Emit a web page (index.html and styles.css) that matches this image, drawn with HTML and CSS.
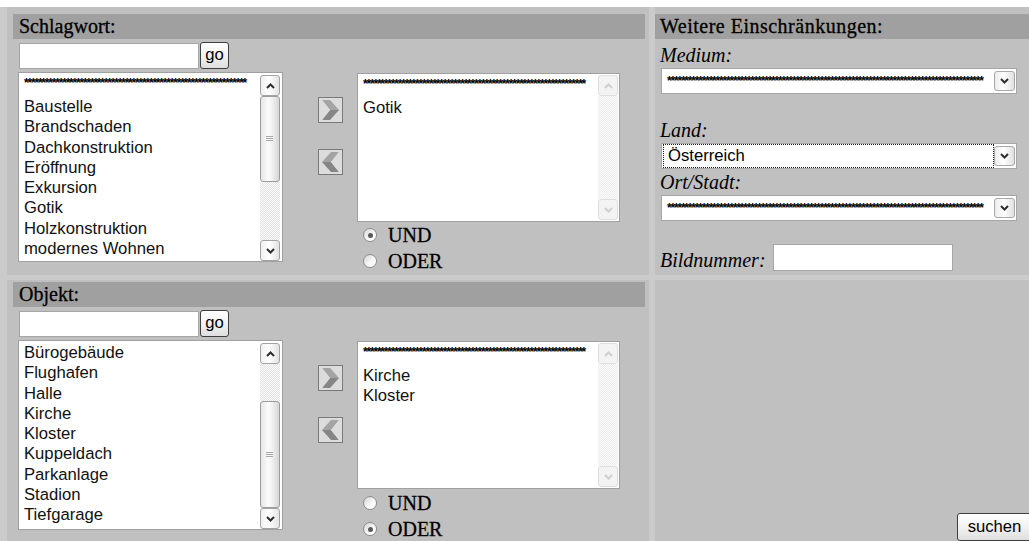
FILE: index.html
```html
<!DOCTYPE html>
<html lang="de">
<head>
<meta charset="utf-8">
<title>Bildsuche</title>
<link rel="stylesheet" href="styles.css">
</head>
<body>
<form class="search">

  <!-- Schlagwort -->
  <section class="panel panel-left panel-top">
    <h2 class="panel-title">Schlagwort:</h2>
    <div class="lookup">
      <span class="text-field"></span>
      <span class="btn btn-go">go</span>
    </div>
    <div class="picker">
      <div class="listbox listbox-source">
        <ul class="options">
          <li class="opt-stars">****************************************************************</li>
          <li>Baustelle</li>
          <li>Brandschaden</li>
          <li>Dachkonstruktion</li>
          <li>Eröffnung</li>
          <li>Exkursion</li>
          <li>Gotik</li>
          <li>Holzkonstruktion</li>
          <li>modernes Wohnen</li>
        </ul>
        <div class="scrollbar">
          <span class="sb-btn"><svg width="9" height="6" viewBox="0 0 9 6"><polyline points="1,5 4.5,1.5 8,5" /></svg></span>
          <span class="sb-thumb sb-thumb-a"></span>
          <span class="sb-track"></span>
          <span class="sb-btn"><svg width="9" height="6" viewBox="0 0 9 6"><polyline points="1,1 4.5,4.5 8,1" /></svg></span>
        </div>
      </div>
      <div class="movers">
        <span class="mover"><svg width="25" height="26" viewBox="0 0 25 26"><rect x="0.5" y="0.5" width="24" height="25" class="mover-face"/><polygon points="4,3 12,3 21,13 12,13" class="mover-hi"/><polygon points="12,13 21,13 12,23 4,23" class="mover-lo"/><polygon points="4,3 12,13 4,23" class="mover-notch"/></svg></span>
        <span class="mover"><svg width="25" height="26" viewBox="0 0 25 26"><rect x="0.5" y="0.5" width="24" height="25" class="mover-face"/><polygon points="21,3 13,3 4,13 13,13" class="mover-hi"/><polygon points="13,13 4,13 13,23 21,23" class="mover-lo"/><polygon points="21,3 13,13 21,23" class="mover-notch"/></svg></span>
      </div>
      <div class="chosen">
        <div class="listbox listbox-target">
          <ul class="options">
            <li class="opt-stars">****************************************************************</li>
            <li>Gotik</li>
          </ul>
          <div class="scrollbar is-disabled">
            <span class="sb-btn"><svg width="9" height="6" viewBox="0 0 9 6"><polyline points="1,5 4.5,1.5 8,5" /></svg></span>
            <span class="sb-track"></span>
            <span class="sb-btn"><svg width="9" height="6" viewBox="0 0 9 6"><polyline points="1,1 4.5,4.5 8,1" /></svg></span>
          </div>
        </div>
        <div class="radios">
          <label class="radio-row"><span class="radio is-checked"></span>UND</label>
          <label class="radio-row"><span class="radio"></span>ODER</label>
        </div>
      </div>
    </div>
  </section>

  <!-- Weitere Einschränkungen -->
  <section class="panel panel-right panel-top">
    <h2 class="panel-title">Weitere Einschränkungen:</h2>
    <div class="field-label label-medium">Medium:</div>
    <div class="dropdown">
      <span class="dropdown-value value-stars">*******************************************************************************************</span>
      <span class="dropdown-btn"><svg width="9" height="6" viewBox="0 0 9 6"><polyline points="1,1 4.5,4.5 8,1" /></svg></span>
    </div>
    <div class="field-label label-land">Land:</div>
    <div class="dropdown">
      <span class="dropdown-value is-focused">Österreich</span>
      <span class="dropdown-btn"><svg width="9" height="6" viewBox="0 0 9 6"><polyline points="1,1 4.5,4.5 8,1" /></svg></span>
    </div>
    <div class="field-label label-ort">Ort/Stadt:</div>
    <div class="dropdown">
      <span class="dropdown-value value-stars">*******************************************************************************************</span>
      <span class="dropdown-btn"><svg width="9" height="6" viewBox="0 0 9 6"><polyline points="1,1 4.5,4.5 8,1" /></svg></span>
    </div>
    <div class="number-row">
      <span class="field-label">Bildnummer:</span>
      <span class="text-field number-field"></span>
    </div>
  </section>

  <!-- Objekt -->
  <section class="panel panel-left panel-bottom">
    <h2 class="panel-title">Objekt:</h2>
    <div class="lookup">
      <span class="text-field"></span>
      <span class="btn btn-go">go</span>
    </div>
    <div class="picker">
      <div class="listbox listbox-source">
        <ul class="options">
          <li>Bürogebäude</li>
          <li>Flughafen</li>
          <li>Halle</li>
          <li>Kirche</li>
          <li>Kloster</li>
          <li>Kuppeldach</li>
          <li>Parkanlage</li>
          <li>Stadion</li>
          <li>Tiefgarage</li>
        </ul>
        <div class="scrollbar">
          <span class="sb-btn"><svg width="9" height="6" viewBox="0 0 9 6"><polyline points="1,5 4.5,1.5 8,5" /></svg></span>
          <span class="sb-track sb-track-fixed"></span>
          <span class="sb-thumb sb-thumb-b"></span>
          <span class="sb-btn"><svg width="9" height="6" viewBox="0 0 9 6"><polyline points="1,1 4.5,4.5 8,1" /></svg></span>
        </div>
      </div>
      <div class="movers">
        <span class="mover"><svg width="25" height="26" viewBox="0 0 25 26"><rect x="0.5" y="0.5" width="24" height="25" class="mover-face"/><polygon points="4,3 12,3 21,13 12,13" class="mover-hi"/><polygon points="12,13 21,13 12,23 4,23" class="mover-lo"/><polygon points="4,3 12,13 4,23" class="mover-notch"/></svg></span>
        <span class="mover"><svg width="25" height="26" viewBox="0 0 25 26"><rect x="0.5" y="0.5" width="24" height="25" class="mover-face"/><polygon points="21,3 13,3 4,13 13,13" class="mover-hi"/><polygon points="13,13 4,13 13,23 21,23" class="mover-lo"/><polygon points="21,3 13,13 21,23" class="mover-notch"/></svg></span>
      </div>
      <div class="chosen">
        <div class="listbox listbox-target listbox-short">
          <ul class="options">
            <li class="opt-stars">****************************************************************</li>
            <li>Kirche</li>
            <li>Kloster</li>
          </ul>
          <div class="scrollbar is-disabled">
            <span class="sb-btn"><svg width="9" height="6" viewBox="0 0 9 6"><polyline points="1,5 4.5,1.5 8,5" /></svg></span>
            <span class="sb-track"></span>
            <span class="sb-btn"><svg width="9" height="6" viewBox="0 0 9 6"><polyline points="1,1 4.5,4.5 8,1" /></svg></span>
          </div>
        </div>
        <div class="radios radios-low">
          <label class="radio-row"><span class="radio"></span>UND</label>
          <label class="radio-row"><span class="radio is-checked"></span>ODER</label>
        </div>
      </div>
    </div>
  </section>

  <!-- Absenden -->
  <section class="panel panel-right panel-bottom panel-submit">
    <span class="btn btn-submit">suchen</span>
  </section>

</form>
</body>
</html>
```

FILE: styles.css
```css
* {
  box-sizing: border-box;
}

html,
body {
  margin: 0;
  padding: 0;
}

body {
  width: 1029px;
  height: 541px;
  overflow: hidden;
  background: #ffffff;
  font-family: "Liberation Sans", Arial, sans-serif;
  color: #000;
}

/* outer frame: two columns, two rows, light gutters */
.search {
  display: grid;
  grid-template-columns: 642px 380px;
  grid-template-rows: 268px 262px;
  column-gap: 6px;
  row-gap: 5px;
  width: 1040px;
  margin-top: 7px;
  padding-left: 7px;
  background: #cbcbcb;
}

.panel {
  background: #c0c0c0;
  min-width: 0;
}

.panel-left {
  padding: 7px 4px 0 6px;
}

.panel-left.panel-bottom {
  padding-top: 2px;
}

.panel-right {
  padding-top: 7px;
}

.panel-title {
  margin: 0;
  height: 25px;
  padding-left: 6px;
  background: #a0a0a0;
  font: normal 20px/25px "Liberation Serif", "Times New Roman", serif;
  color: #000;
  -webkit-text-stroke: 0.3px #000;
  white-space: nowrap;
}

.panel-right .panel-title {
  padding-left: 5px;
  letter-spacing: 0.5px;
}

/* search field + go */
.lookup {
  display: flex;
  align-items: center;
  height: 27px;
  margin: 3px 0 0 6px;
}

.text-field {
  display: block;
  width: 180px;
  height: 26px;
  border: 1px solid #a6a6a6;
  background: #fff;
}

.btn {
  display: flex;
  align-items: center;
  justify-content: center;
  border: 1px solid #3e3e3e;
  border-radius: 3px;
  background: linear-gradient(#ffffff, #f2f2f2 50%, #dedede);
  font-size: 16.67px;
  color: #000;
}

.btn-go {
  width: 29px;
  height: 27px;
  margin-left: 1px;
  padding-bottom: 1px;
}

/* source list, mover buttons, chosen list */
.picker {
  display: flex;
  align-items: flex-start;
  margin: 3px 0 0 5px;
}

.listbox {
  display: flex;
  border: 1px solid #a0a0a0;
  background: #fff;
  overflow: hidden;
}

.listbox-source {
  width: 265px;
  height: 190px;
}

.listbox-target {
  width: 263px;
  height: 149px;
}

.listbox-short {
  height: 148px;
}

.options {
  flex: 1;
  margin: 0;
  padding: 2px 0 0 5px;
  list-style: none;
  font-size: 16.67px;
  line-height: 20.3px;
  color: #111;
  white-space: nowrap;
  overflow: hidden;
}

/* placeholder row of asterisks, drawn as a dense chain */
.opt-stars {
  height: 22px;
  padding-top: 2px;
  font-size: 12px;
  font-weight: bold;
  line-height: 12px;
  letter-spacing: -1.2px;
  color: #000;
}

.scrollbar {
  display: flex;
  flex-direction: column;
  flex: none;
  width: 20px;
  margin: 2px 2px 0 0;
}

.listbox-target .scrollbar {
  margin: 1px 1px 1px 0;
}

.sb-btn {
  display: flex;
  align-items: center;
  justify-content: center;
  flex: none;
  height: 21px;
  border: 1px solid #a3a3a3;
  border-radius: 3px;
  background: linear-gradient(90deg, #f0f0f0, #ffffff 45%, #e2e2e2);
}

.sb-btn polyline {
  fill: none;
  stroke: #2e2e2e;
  stroke-width: 2;
}

.sb-track {
  flex: 1;
  background: repeating-conic-gradient(#e2e2e2 0 25%, #fbfbfb 0 50%) 0 0 / 2px 2px;
}

.sb-track-fixed {
  flex: none;
  height: 37px;
}

.sb-thumb {
  position: relative;
  flex: none;
  border: 1px solid #9c9c9c;
  border-radius: 3px;
  background: linear-gradient(90deg, #e6e6e6, #fbfbfb 40%, #f2f2f2 60%, #d6d6d6);
}

.sb-thumb::after {
  content: "";
  position: absolute;
  left: 5px;
  top: 50%;
  width: 7px;
  height: 5px;
  margin-top: -3px;
  background: repeating-linear-gradient(#a8a8a8 0 1px, transparent 1px 2px);
}

.sb-thumb-a {
  height: 86px;
}

.sb-thumb-b {
  flex: 1;
}

.scrollbar.is-disabled .sb-btn {
  border-color: #dedede;
  background: #f3f3f3;
}

.scrollbar.is-disabled polyline {
  stroke: #cfcfcf;
}

.scrollbar.is-disabled .sb-track {
  background: repeating-conic-gradient(#ececec 0 25%, #fdfdfd 0 50%) 0 0 / 2px 2px;
}

.movers {
  display: flex;
  flex-direction: column;
  gap: 26px;
  width: 25px;
  margin: 25px 14px 0 35px;
}

.mover {
  display: block;
  width: 25px;
  height: 26px;
}

.mover svg {
  display: block;
}

.mover-face {
  fill: #dcdcdc;
  stroke: #7a7a7a;
}

.mover-hi {
  fill: #a4a4a4;
}

.mover-lo {
  fill: #868686;
}

.mover-notch {
  fill: #dcdcdc;
}

.chosen {
  margin-top: 1px;
}

.radios {
  display: flex;
  flex-direction: column;
}

.radios-low {
  margin-top: 1px;
}

.radio-row {
  display: flex;
  align-items: center;
  height: 26px;
  padding-left: 6px;
  font: normal 20px/26px "Liberation Serif", "Times New Roman", serif;
  -webkit-text-stroke: 0.3px #000;
}

.radio {
  position: relative;
  flex: none;
  width: 14px;
  height: 14px;
  margin-right: 11px;
  border: 1px solid #8c8c8c;
  border-radius: 50%;
  background: linear-gradient(135deg, #d6d6d6, #ffffff 70%);
}

.radio.is-checked::after {
  content: "";
  position: absolute;
  left: 3.5px;
  top: 3.5px;
  width: 5px;
  height: 5px;
  border-radius: 50%;
  background: #5a5a5a;
}

/* right column filters */
.field-label {
  display: block;
  margin-left: 5px;
  font: italic 20px/24px "Liberation Serif", "Times New Roman", serif;
  color: #000;
}

.label-medium {
  margin-top: 4px;
}

.label-land {
  margin-top: 24px;
}

.label-ort {
  margin-top: 1px;
}

.dropdown {
  display: flex;
  align-items: center;
  width: 356px;
  height: 26px;
  margin: 1px 0 0 6px;
  padding-right: 1px;
  border: 1px solid #a6a6a6;
  background: #fff;
}

.dropdown-value {
  flex: 1;
  height: 24px;
  margin-left: 1px;
  padding-left: 4px;
  border: 1px solid transparent;
  font-size: 16.67px;
  line-height: 22px;
  white-space: nowrap;
  overflow: hidden;
}

.dropdown-value.is-focused {
  border: 1px dotted #1a1a1a;
}

.value-stars {
  padding-left: 3px;
  font-size: 12px;
  font-weight: bold;
  line-height: 22px;
  letter-spacing: -1.2px;
}

.dropdown-btn {
  display: flex;
  align-items: center;
  justify-content: center;
  flex: none;
  width: 21px;
  height: 20px;
  border: 1px solid #a8a8a8;
  border-radius: 3px;
  background: linear-gradient(90deg, #ececec, #ffffff 45%, #e0e0e0);
}

.dropdown-btn polyline {
  fill: none;
  stroke: #2e2e2e;
  stroke-width: 2;
}

.number-row {
  display: flex;
  align-items: flex-end;
  margin-top: 23px;
}

.number-row .field-label {
  margin-bottom: -1px;
}

.number-field {
  width: 180px;
  height: 27px;
  margin-left: 7px;
}

/* submit */
.panel-submit {
  display: flex;
  flex-direction: column;
  justify-content: flex-end;
  align-items: flex-end;
  padding: 0 3px 1px 0;
}

.btn-submit {
  width: 75px;
  height: 28px;
  padding-bottom: 1px;
}
```
